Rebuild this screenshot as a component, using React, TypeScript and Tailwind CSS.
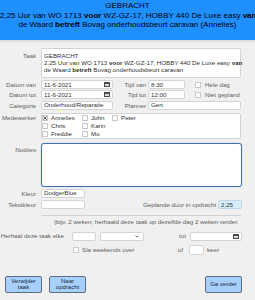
import React from 'react'

function Cal() {
  return (
    <svg width="6" height="5" viewBox="0 0 6 5" className="shrink-0">
      <rect x="0" y="0" width="6" height="5" fill="#4a4a4a" />
      <rect x="1" y="2" width="4" height="2" fill="#d8d8d8" />
    </svg>
  )
}

function Box({ checked }: { checked?: boolean }) {
  return (
    <span className="w-[6px] h-[6px] shrink-0 bg-white border border-[#c9c9c9] flex items-center justify-center">
      {checked && (
        <svg width="6" height="6" viewBox="0 0 6 6">
          <path d="M0.5 0.5 L5.5 5.5 M5.5 0.5 L0.5 5.5" stroke="#111" strokeWidth="1.1" />
        </svg>
      )}
    </span>
  )
}

function Field({ w, text, cal, h = 'h-[9px]' }: { w: string; text?: string; cal?: boolean; h?: string }) {
  return (
    <div className={`${w} ${h} shrink-0 bg-white border border-[#d3d3d3] rounded-[2px] flex items-center pl-[2px] pr-[2px] text-[#333] leading-none`}>
      <span className="flex-1 whitespace-nowrap overflow-hidden">{text}</span>
      {cal && <Cal />}
    </div>
  )
}

function Label({ children, w = 'w-[36px]' }: { children: React.ReactNode; w?: string }) {
  return <span className={`${w} shrink-0 text-right whitespace-nowrap`}>{children}</span>
}

function Check({ name, checked }: { name: string; checked?: boolean }) {
  return (
    <div className="flex items-center gap-[3px] h-[8px]">
      <Box checked={checked} />
      <span className="text-[#333] whitespace-nowrap">{name}</span>
    </div>
  )
}

function Btn({ children }: { children: React.ReactNode }) {
  return (
    <button className="w-[37px] h-[17px] bg-[#a6cffb] border border-[#5d6e80] rounded-[2px] text-[6px] leading-[6.5px] text-[#1a2a40] text-center">
      {children}
    </button>
  )
}

export default function App() {
  return (
    <div className="w-[255px] h-[300px] bg-[#f0f0f0] text-[6.2px] font-['Liberation_Sans',Arial,sans-serif] text-[#606060] overflow-hidden">
      <header className="h-[40px] bg-[#1e90ff] text-black text-center text-[8px] leading-[9.5px] pt-[1px]">
        <p>GEBRACHT</p>
        <p className="whitespace-nowrap">2,25 Uur van WO 1713 <b>voor</b> WZ-GZ-17, HOBBY 440 De Luxe easy <b>van</b></p>
        <p>de Waard <b>betreft</b> Bovag onderhoudsbeurt caravan (Annelies)</p>
      </header>
      <div className="h-[2px] bg-[#dedede]" />

      <div className="w-[242px] pt-[6px]">
        <div className="flex items-start gap-[5px]">
          <span className="w-[36px] shrink-0 text-right mt-[4px] leading-[7px]">Taak</span>
          <div className="w-[200px] h-[30px] bg-white border border-[#d3d3d3] rounded-[2px] px-[2px] pt-[3px] leading-[7px] text-[#333] whitespace-nowrap">
            <p>GEBRACHT</p>
            <p>2,25 Uur van WO 1713 <b>voor</b> WZ-GZ-17, HOBBY 440 De Luxe easy <b>van</b></p>
            <p>de Waard <b>betreft</b> Bovag onderhoudsbeurt caravan</p>
          </div>
        </div>

        <div className="flex items-center mt-[2px]">
          <Label>Datum van</Label>
          <div className="ml-[5px]"><Field w="w-[72px]" text="11-6-2021" cal /></div>
          <Label w="w-[33px]">Tijd van</Label>
          <div className="ml-[2px]"><Field w="w-[37px]" text="8:30" /></div>
          <div className="ml-[10px] flex items-center gap-[4px]"><Box /><span>Hele dag</span></div>
        </div>
        <div className="flex items-center mt-[1px]">
          <Label>Datum tot</Label>
          <div className="ml-[5px]"><Field w="w-[72px]" text="11-6-2021" cal /></div>
          <Label w="w-[33px]">Tijd tot</Label>
          <div className="ml-[2px]"><Field w="w-[37px]" text="12:00" /></div>
          <div className="ml-[10px] flex items-center gap-[4px]"><Box /><span>Niet gepland</span></div>
        </div>
        <div className="flex items-center mt-[1px]">
          <Label>Categorie</Label>
          <div className="ml-[5px]"><Field w="w-[72px]" text="Onderhoud/Reparatie" /></div>
          <Label w="w-[33px]">Planner</Label>
          <div className="ml-[2px]"><Field w="w-[93px]" text="Gert" /></div>
        </div>

        <div className="flex items-start gap-[5px] mt-[3px]">
          <span className="w-[36px] shrink-0 text-right mt-[1px] leading-[8px]">Medewerker</span>
          <div className="w-[200px] h-[26px] bg-white border border-[#d3d3d3] rounded-[2px] grid grid-cols-[40px_30px_1fr] content-start">
            <Check name="Annelies" checked />
            <Check name="John" />
            <Check name="Peter" />
            <Check name="Chris" />
            <Check name="Karin" />
            <div />
            <Check name="Freddie" />
            <Check name="Mo" />
          </div>
        </div>

        <div className="flex items-start gap-[5px] mt-[4px]">
          <span className="w-[36px] shrink-0 text-right mt-[3px] leading-[7px]">Notities</span>
          <div className="w-[201px] h-[44px] bg-white border border-[#3f6fae] rounded-[3px] shadow-[0_0_1px_#7fa6d8]" />
        </div>

        <div className="flex items-center gap-[5px] mt-[2px]">
          <Label>Kleur</Label>
          <Field w="w-[44px]" text="DodgerBlue" />
        </div>
        <div className="flex items-center mt-[2px]">
          <Label>Tekstkleur</Label>
          <div className="ml-[5px]"><Field w="w-[44px]" /></div>
          <span className="ml-[58px] whitespace-nowrap">Geplande duur in opdracht</span>
          <div className="ml-auto w-[24px] h-[9px] bg-[#d8edfc] border border-[#c3d6e6] rounded-[2px] flex items-center pl-[2px] text-[#333] leading-none">2,25</div>
        </div>

        <div className="ml-[41px] w-[200px] h-px bg-[#d2d2d2] mt-[6px]" />
        <p className="pl-[54px] mt-[2px] leading-[8px] whitespace-nowrap">(bijv. 2 weken; herhaald deze taak op dezelfde dag 2 weken verder.</p>

        <div className="flex items-center mt-[5px]">
          <Label w="w-[64px]">Herhaal deze taak elke</Label>
          <div className="ml-[8px]"><Field w="w-[24px]" /></div>
          <div className="ml-[4px] w-[44px] h-[9px] bg-white border border-[#d3d3d3] rounded-[2px] flex items-center justify-end pr-[4px]">
            <svg width="4" height="3" viewBox="0 0 4 3"><path d="M0.5 0.5 L2 2 L3.5 0.5" stroke="#555" strokeWidth="0.8" fill="none" /></svg>
          </div>
          <span className="ml-auto mr-[4px]">tot</span>
          <Field w="w-[52px]" cal />
        </div>

        <div className="flex items-center mt-[4px]">
          <div className="ml-[73px] flex items-center gap-[3px]"><Box /><span>Sla weekends over</span></div>
          <span className="ml-auto mr-[6px]">of</span>
          <Field w="w-[15px]" h="h-[10px]" />
          <span className="ml-[3px] mr-[23px]">keer</span>
        </div>

        <div className="flex items-center mt-[21px] pl-[5px]">
          <Btn>Verwijder<br />taak</Btn>
          <div className="ml-[7px]"><Btn>Naar<br />opdracht</Btn></div>
          <div className="ml-auto"><Btn>Ga verder</Btn></div>
        </div>
      </div>
    </div>
  )
}
